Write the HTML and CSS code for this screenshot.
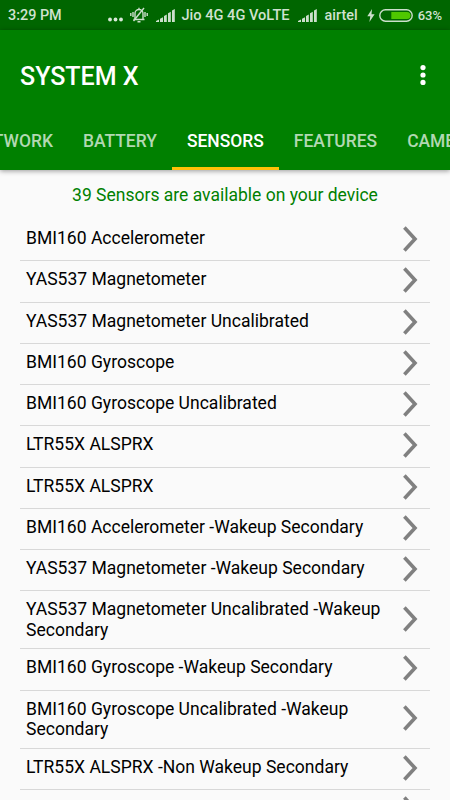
FILE: index.html
```
<!DOCTYPE html>
<html lang="en">
<head>
    <meta charset="UTF-8">
    <title>System X</title>
    <link rel="stylesheet" href="styles.css">
</head>
<body>
    <svg class="symbols" width="0" height="0">
        <symbol id="arrow" viewBox="0 0 16 28">
            <path d="M2.4 2.6 L13 14 L2.4 25.4" fill="none" stroke="#808080" stroke-width="3.6"/>
        </symbol>
        <symbol id="signal" viewBox="0 0 19 13">
            <path d="M0 12l3-1.5V13H0z M4 9.8l3-1.5V13H4z M8 7l2.8-1.5V13H8z M12 4.3l2.8-1.6V13H12z M16 1.6L18.8 0v13H16z" fill="#ccdfcc"/>
        </symbol>
    </svg>

    <div class="status">
        <span class="clock">3:29 PM</span>
        <div class="status-right">
            <svg class="dots" width="15" height="5" viewBox="0 0 15 5">
                <g fill="#d8e8d8">
                    <circle cx="2" cy="2.5" r="1.9"/>
                    <circle cx="7.5" cy="2.5" r="1.9"/>
                    <circle cx="13" cy="2.5" r="1.9"/>
                </g>
            </svg>
            <svg class="bell" width="18" height="16" viewBox="0 0 18 16">
                <g fill="none" stroke="#ccdfcc" stroke-width="1.4">
                    <path d="M3.5 12.5h11 M5 12V6.5a4 4 0 0 1 8 0V12 M7.5 14.7h3 M9 2.5V.8"/>
                    <path d="M3 5v5 M.8 6v3 M15 5v5 M17.2 6v3"/>
                    <path d="M3.5 14L14 1"/>
                </g>
            </svg>
            <svg class="signal" width="19" height="13"><use href="#signal"/></svg>
            <span class="jio">Jio 4G 4G VoLTE</span>
            <svg class="signal" width="19" height="13"><use href="#signal"/></svg>
            <span class="airtel">airtel</span>
            <svg class="bolt" width="8" height="13" viewBox="0 0 8 13">
                <path d="M5 0L.3 7.2h3L2.4 13l5.2-7.8H4.5z" fill="#ccdfcc"/>
            </svg>
            <svg class="battery" width="34" height="13" viewBox="0 0 34 13">
                <rect x=".8" y=".8" width="32.4" height="11.4" rx="5.7" fill="none" stroke="#ccdfcc" stroke-width="1.4"/>
                <path d="M12.3 3H28a3.5 3.5 0 0 1 0 7H12.3z" fill="#4fc800"/>
            </svg>
            <span class="percent">63%</span>
        </div>
    </div>

    <header>
        <div class="toolbar">
            <h1>SYSTEM X</h1>
            <svg width="6" height="20" viewBox="0 0 6 20">
                <g fill="#fff">
                    <circle cx="3" cy="2.6" r="2.6"/>
                    <circle cx="3" cy="10" r="2.6"/>
                    <circle cx="3" cy="17.4" r="2.6"/>
                </g>
            </svg>
        </div>
        <nav class="tabs">
            <span class="tab">NETWORK</span>
            <span class="tab">BATTERY</span>
            <span class="tab active">SENSORS</span>
            <span class="tab">FEATURES</span>
            <span class="tab">CAMERA</span>
        </nav>
    </header>

    <main>
        <p class="count">39 Sensors are available on your device</p>
        <ul class="sensors">
            <li><span>BMI160 Accelerometer</span><svg class="arrow"><use href="#arrow"/></svg></li>
            <li><span>YAS537 Magnetometer</span><svg class="arrow"><use href="#arrow"/></svg></li>
            <li><span>YAS537 Magnetometer Uncalibrated</span><svg class="arrow"><use href="#arrow"/></svg></li>
            <li><span>BMI160 Gyroscope</span><svg class="arrow"><use href="#arrow"/></svg></li>
            <li><span>BMI160 Gyroscope Uncalibrated</span><svg class="arrow"><use href="#arrow"/></svg></li>
            <li><span>LTR55X ALSPRX</span><svg class="arrow"><use href="#arrow"/></svg></li>
            <li><span>LTR55X ALSPRX</span><svg class="arrow"><use href="#arrow"/></svg></li>
            <li><span>BMI160 Accelerometer -Wakeup Secondary</span><svg class="arrow"><use href="#arrow"/></svg></li>
            <li><span>YAS537 Magnetometer -Wakeup Secondary</span><svg class="arrow"><use href="#arrow"/></svg></li>
            <li><span>YAS537 Magnetometer Uncalibrated -Wakeup Secondary</span><svg class="arrow"><use href="#arrow"/></svg></li>
            <li><span>BMI160 Gyroscope -Wakeup Secondary</span><svg class="arrow"><use href="#arrow"/></svg></li>
            <li><span>BMI160 Gyroscope Uncalibrated -Wakeup Secondary</span><svg class="arrow"><use href="#arrow"/></svg></li>
            <li><span>LTR55X ALSPRX -Non Wakeup Secondary</span><svg class="arrow"><use href="#arrow"/></svg></li>
            <li><span></span><svg class="arrow"><use href="#arrow"/></svg></li>
        </ul>
    </main>
</body>
</html>
```
FILE: styles.css
```
* {
    box-sizing: border-box;
}
body {
    margin: 0;
    height: 800px;
    overflow: hidden;
    display: flex;
    flex-direction: column;
    background: #fafafa;
    font-family: Roboto, sans-serif;
}
svg {
    display: block;
    flex: none;
}
.symbols {
    position: absolute;
}
.status {
    flex: none;
    height: 30px;
    padding: 0 8px;
    display: flex;
    align-items: center;
    justify-content: space-between;
    background: #006600;
    color: #d0e2d0;
    font-size: 14.6px;
    font-weight: 500;
    white-space: nowrap;
}
.clock {
    font-size: 14.4px;
}
.status-right {
    display: flex;
    align-items: center;
}
.dots {
    margin: 9px 7px 0 0;
}
.bell {
    margin-right: 8px;
}
.jio {
    margin: 0 8px 0 7px;
}
.airtel {
    font-size: 14.4px;
    margin: 0 9px 0 8px;
}
.bolt {
    margin-right: 4px;
}
.battery {
    margin-right: 5px;
}
.percent {
    font-size: 13px;
}
header {
    flex: none;
    height: 140px;
    background: #008000;
    color: #fff;
    box-shadow: 0 1px 5px rgba(0, 0, 0, 0.4);
    overflow-x: clip;
}
.toolbar {
    height: 90px;
    padding: 0 24.5px 0 20px;
    display: flex;
    align-items: center;
    justify-content: space-between;
}
h1 {
    margin: 2px 0 0;
    font-size: 25px;
    font-weight: 500;
}
.tabs {
    display: flex;
    height: 50px;
    margin-left: -44.6px;
}
.tab {
    flex: none;
    padding: 0 15px;
    font-size: 17.45px;
    font-weight: 500;
    line-height: 42px;
    color: #b2d8b2;
    border-bottom: 3px solid transparent;
}
.tab.active {
    color: #fff;
    border-bottom-color: #ffc107;
}
.count {
    margin: 15px 0 0;
    font-size: 17.5px;
    line-height: 21px;
    text-align: center;
    color: #008000;
}
.sensors {
    margin: 14.1px 20px 0;
    padding: 0;
    list-style: none;
}
.sensors li {
    display: flex;
    align-items: center;
    min-height: 41.25px;
    padding: 0 12px 0 6px;
    border-bottom: 1px solid #d8d8d8;
    font-size: 17.55px;
    line-height: 20.7px;
    color: #000;
}
.sensors span {
    flex: 1;
    align-self: flex-start;
    padding: 8px 9px 7.6px 0;
}
.arrow {
    width: 16px;
    height: 28px;
    margin-top: -2px;
}
```
